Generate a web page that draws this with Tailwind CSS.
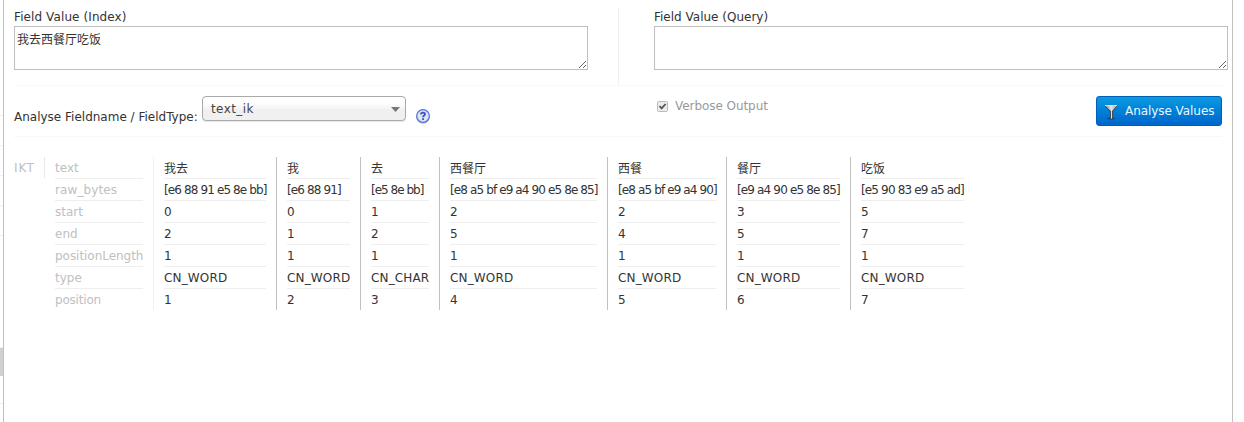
<!DOCTYPE html>
<html lang="en">
<head>
<meta charset="utf-8">
<title>Analysis</title>
<script src="https://cdn.jsdelivr.net/npm/@tailwindcss/browser@4"></script>
</head>
<body class="flex h-[422px] w-[1244px] overflow-hidden bg-white font-['DejaVu_Sans','Noto_Sans_CJK_SC',sans-serif] text-[12px] leading-[16px] text-[#333]">
<aside class="flex h-full w-[3px] shrink-0 flex-col pt-[115px]">
  <div class="h-[30px] border-t border-[#f0f0f0]"></div>
  <div class="h-[30px] border-t border-[#f0f0f0]"></div>
  <div class="h-[30px] border-t border-[#f0f0f0]"></div>
  <div class="h-[30px] border-t border-[#f0f0f0]"></div>
  <div class="h-[112px] border-t border-[#f0f0f0]"></div>
  <div class="h-[29px] border-t border-[#f0f0f0] bg-[#d0d0d0]"></div>
  <div class="h-[27px]"></div>
  <div class="border-t border-[#f0f0f0]"></div>
</aside>
<main class="h-full w-[1230px] border-x border-[#c0c0c0] pl-[10px]">
  <section class="flex h-[86px] w-[1208px] border-b border-[#f8f8f8] pt-[7px]">
    <div class="h-[78px] w-[605px] shrink-0 border-r border-[#f0f0f0] pt-[2px]">
      <label class="block h-[17px] w-max tracking-[0.1px]" for="index">Field Value (Index)</label>
      <textarea id="index" class="block h-[44px] w-[574px] border border-[#bfbfbf] px-[2px] pt-[5px] text-[12px] leading-[16px]">我去西餐厅吃饭</textarea>
    </div>
    <div class="w-[574px] shrink-0 pt-[2px] ml-[35px]">
      <label class="block h-[17px] w-max" for="query">Field Value (Query)</label>
      <textarea id="query" class="block h-[44px] w-[574px] border border-[#bfbfbf] px-[2px] pt-[4px]"></textarea>
    </div>
  </section>
  <section class="flex h-[51px] w-[1208px] border-b border-[#f8f8f8]">
    <label class="w-[188px] shrink-0 whitespace-nowrap pt-[23px]">Analyse Fieldname / FieldType:</label>
    <div class="mt-[10px] flex h-[25px] w-[204px] items-center justify-between rounded-[4px] border border-[#aaa] bg-linear-to-b from-white from-20% via-[#f6f6f6] via-50% to-[#f0f0f0] to-52% pr-[5px] pl-[8px] text-[#444] shadow-[0_1px_1px_rgba(0,0,0,0.1)]">
      <span class="tracking-[0.4px]">text_ik</span>
      <svg class="mt-px h-[5px] w-[9px]" viewBox="0 0 9 5"><path d="M0 0h9L4.5 5z" fill="#777"/></svg>
    </div>
    <svg class="mt-[22px] ml-[9px] h-[16px] w-[16px]" viewBox="0 0 16 16">
      <circle cx="8" cy="8.8" r="7" fill="#bbb"/>
      <circle cx="8" cy="8" r="6.3" fill="#e2e5ee" stroke="#5474e2" stroke-width="1.2"/>
      <path d="M5.9 6.4C6 4.2 10 4.1 10 6.2 10 7.6 8.1 7.5 8.1 9.2M8.1 10.3v1.6" fill="none" stroke="#3450d4" stroke-width="1.8"/>
    </svg>
    <div class="mt-[12px] ml-[226px] flex h-[16px] w-[440px] text-[#999]">
      <svg class="mt-[3px] mr-[7px] h-[11px] w-[11px]" viewBox="0 0 11 11">
        <rect x=".5" y=".5" width="10" height="10" rx="1" fill="#ececec" stroke="#bbb"/>
        <path d="M2.5 5l2.1 2.4L8.6 3" fill="none" stroke="#555" stroke-width="1.8"/>
      </svg>
      <span class="tracking-[-0.06px]">Verbose Output</span>
    </div>
    <button class="mt-[10px] -ml-px flex h-[30px] w-[126px] shrink-0 items-center rounded-[3px] border border-[#0060b4] bg-linear-to-b from-[#0c9ae2] to-[#0066cc] pl-[8px] whitespace-nowrap text-[#eef6ff]">
      <svg class="mt-px -ml-px mr-[7px] h-[16px] w-[14px] shrink-0" viewBox="0 0 14 16">
        <defs><linearGradient id="metal"><stop stop-color="#8c8c8c"/><stop offset=".5" stop-color="#e6e6e6"/><stop offset="1" stop-color="#aaa"/></linearGradient></defs>
        <ellipse cx="7" cy="14.5" rx="4" ry="1" fill="#064b91"/>
        <path d="M1 1h12v1.5L9 7.4V15H6V7.4L1 2.5z" fill="#3d4f5e"/>
        <path d="M1.5 1h11v1L8 7V14.5H7V7L1.5 2z" fill="url(#metal)"/>
        <path d="M1 1.5h12" stroke="#e0e0e0"/>
      </svg>
      <span class="tracking-[-0.06px]">Analyse Values</span>
    </button>
  </section>
  <section class="flex pt-[20px] whitespace-nowrap">
    <div class="h-[21px] w-[31px] shrink-0 border-r border-[#e8e8e8] pt-[3px] tracking-[1px] text-[#c0c0c0]">IKT</div>
    <div class="ml-[10px] w-[88px] shrink-0 text-[#c0c0c0] *:h-[22px] *:border-b *:border-[#eee] *:pt-[3px]">
      <div>text</div><div class="tracking-[0.1px]">raw_bytes</div><div>start</div><div>end</div><div class="tracking-[-0.04px]">positionLength</div><div>type</div><div class="border-b-0! tracking-[-0.2px]">position</div>
    </div>
    <div class="ml-[10px] h-[153px] w-[123px] shrink-0 border-l border-[#f0f0f0] px-[10px] *:h-[22px] *:border-b *:border-[#eee] *:pt-[3px]">
      <div class="pt-[4px]!">我去</div><div class="tracking-[-0.88px]">[e6 88 91 e5 8e bb]</div><div>0</div><div>2</div><div>1</div><div class="tracking-[0.15px]">CN_WORD</div><div class="border-b-0!">1</div>
    </div>
    <div class="h-[153px] w-[84px] shrink-0 border-l border-[#c0c0c0] px-[10px] *:h-[22px] *:border-b *:border-[#eee] *:pt-[3px]">
      <div class="pt-[4px]!">我</div><div class="tracking-[-0.88px]">[e6 88 91]</div><div>0</div><div>1</div><div>1</div><div class="tracking-[0.15px]">CN_WORD</div><div class="border-b-0!">2</div>
    </div>
    <div class="h-[153px] w-[79px] shrink-0 border-l border-[#c0c0c0] px-[10px] *:h-[22px] *:border-b *:border-[#eee] *:pt-[3px]">
      <div class="pt-[4px]!">去</div><div class="tracking-[-0.98px]">[e5 8e bb]</div><div>1</div><div>2</div><div>1</div><div class="tracking-[0.15px]">CN_CHAR</div><div class="border-b-0!">3</div>
    </div>
    <div class="h-[153px] w-[168px] shrink-0 border-l border-[#c0c0c0] px-[10px] *:h-[22px] *:border-b *:border-[#eee] *:pt-[3px]">
      <div class="pt-[4px]!">西餐厅</div><div class="tracking-[-0.88px]">[e8 a5 bf e9 a4 90 e5 8e 85]</div><div>2</div><div>5</div><div>1</div><div class="tracking-[0.15px]">CN_WORD</div><div class="border-b-0!">4</div>
    </div>
    <div class="h-[153px] w-[119px] shrink-0 border-l border-[#c0c0c0] px-[10px] *:h-[22px] *:border-b *:border-[#eee] *:pt-[3px]">
      <div class="pt-[4px]!">西餐</div><div class="tracking-[-0.88px]">[e8 a5 bf e9 a4 90]</div><div>2</div><div>4</div><div>1</div><div class="tracking-[0.15px]">CN_WORD</div><div class="border-b-0!">5</div>
    </div>
    <div class="h-[153px] w-[124px] shrink-0 border-l border-[#c0c0c0] px-[10px] *:h-[22px] *:border-b *:border-[#eee] *:pt-[3px]">
      <div class="pt-[4px]!">餐厅</div><div class="tracking-[-0.85px]">[e9 a4 90 e5 8e 85]</div><div>3</div><div>5</div><div>1</div><div class="tracking-[0.15px]">CN_WORD</div><div class="border-b-0!">6</div>
    </div>
    <div class="h-[153px] w-[124px] shrink-0 border-l border-[#c0c0c0] px-[10px] *:h-[22px] *:border-b *:border-[#eee] *:pt-[3px]">
      <div class="pt-[4px]!">吃饭</div><div class="tracking-[-0.85px]">[e5 90 83 e9 a5 ad]</div><div>5</div><div>7</div><div>1</div><div class="tracking-[0.15px]">CN_WORD</div><div class="border-b-0!">7</div>
    </div>
  </section>
</main>
</body>
</html>
